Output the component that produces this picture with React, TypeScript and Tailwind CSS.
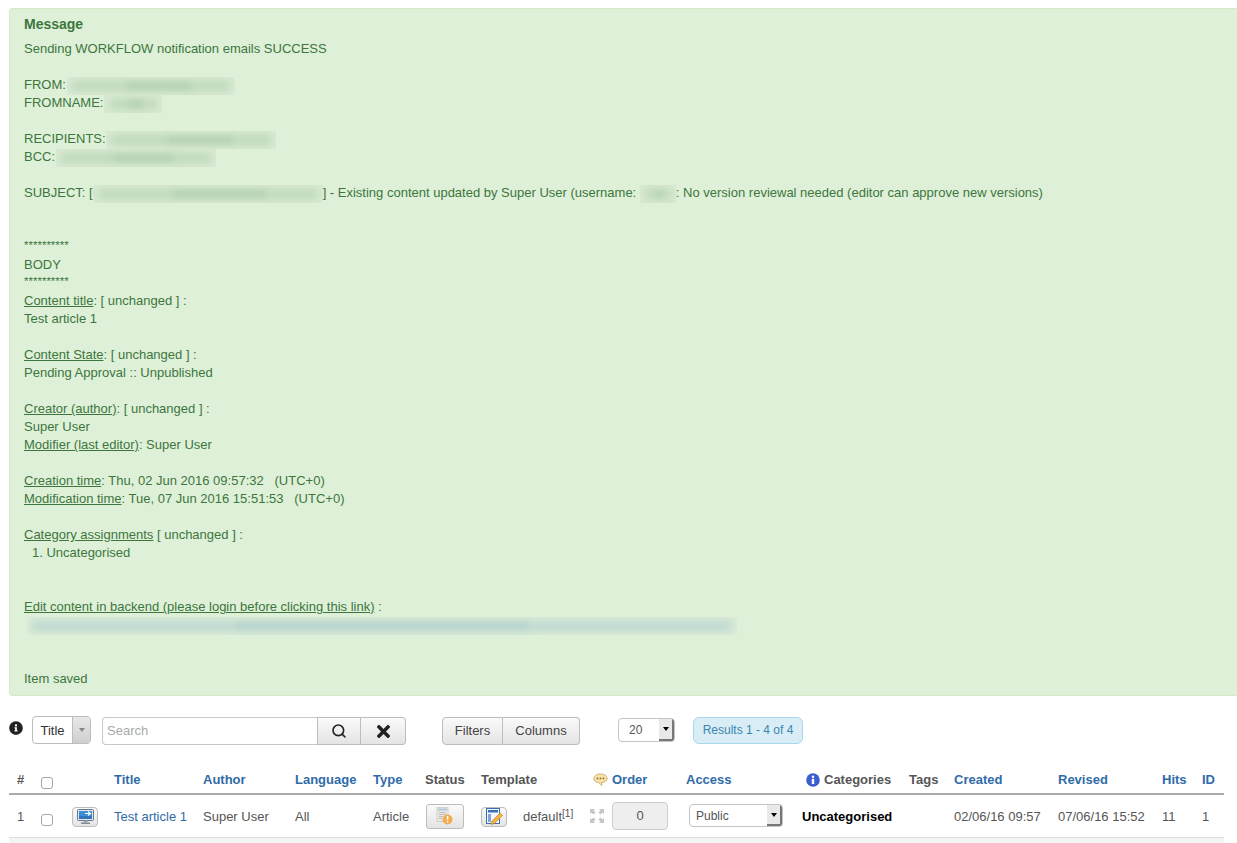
import React from 'react';
import { FaInfoCircle, FaTimes } from 'react-icons/fa';
import { Search } from 'lucide-react';

// redacted bits in the message: pale box with a few soft smudges
const Blur = ({ w, className = '' }: { w: number; className?: string }) => (
  <span className={`inline-flex align-middle h-[18px] overflow-hidden bg-[#d8ead3] px-[5px] items-center ${className}`} style={{ width: w }}>
    <span className="h-[8px] flex-[3] bg-[#b9d5b6] blur-[4px]" />
    <span className="h-[8px] flex-[4] bg-[#a9caa7] blur-[4px]" />
    <span className="h-[8px] flex-[2] bg-[#b9d5b6] blur-[4px]" />
  </span>
);

const Line = ({ children }: { children?: React.ReactNode }) => (
  <div className="h-[18px] leading-[18px] whitespace-nowrap">{children}</div>
);

const Stars = () => <div className="h-[18px] leading-[15px] text-[11.5px] whitespace-nowrap">**********</div>;

const U = ({ children }: { children: React.ReactNode }) => <span className="underline">{children}</span>;

const MonitorIcon = () => (
  <svg width="17" height="16" viewBox="0 0 17 16">
    <rect x="0.500" y="0.500" width="16" height="11" rx="1" fill="#dfe6ec" stroke="#66778a" />
    <rect x="2" y="2" width="13" height="8" fill="#3d8fd8" />
    <rect x="2" y="7" width="13" height="3" fill="#2f74bd" />
    <path d="M8 4.500h5M11 2.500l2.500 2-2.500 2" stroke="#fff" strokeWidth="1.200" fill="none" />
    <rect x="6.500" y="11.500" width="4" height="2" fill="#9aa4ad" />
    <rect x="4" y="13.500" width="9" height="1.500" fill="#7f8a94" />
  </svg>
);

const StatusIcon = () => (
  <svg width="18" height="19" viewBox="0 0 18 19" className="opacity-90">
    <rect x="1" y="0.500" width="11" height="14" fill="#ebe8e0" stroke="#cfccc4" />
    <rect x="2" y="1.500" width="9" height="2" fill="#a9c4de" />
    <path d="M3 5.500h7M3 7.500h7M3 9.500h4M3 11.500h3" stroke="#b4b8bc" strokeWidth="1" />
    <circle cx="11.500" cy="12.500" r="5" fill="#f4a53a" />
    <rect x="10.800" y="9" width="1.500" height="4" fill="#fff" />
    <rect x="10.800" y="14" width="1.500" height="1.500" fill="#fff" />
  </svg>
);

const TemplateIcon = () => (
  <svg width="17" height="17" viewBox="0 0 17 17">
    <rect x="0.500" y="0.500" width="13" height="15" fill="#f4f8fc" stroke="#3d6fb4" />
    <rect x="2" y="2" width="10" height="2.500" fill="#3d6fb4" />
    <rect x="2" y="6" width="3" height="8" fill="#7fa6d6" />
    <path d="M6 13l-1 3.500 3.500-1L16.500 7.500 14 5z" fill="#f3b33d" stroke="#b9772a" strokeWidth="0.600" />
  </svg>
);

const CommentIcon = () => (
  <svg width="15" height="14" viewBox="0 0 15 14">
    <path d="M7.500 1C3.600 1 .8 2.900.8 5.400c0 2.200 2 3.800 4.900 4.200l3.200 3-.5-2.900c3.100-.2 5.800-1.900 5.800-4.300C14.200 2.900 11.400 1 7.500 1z" fill="#f8e0a6" stroke="#c9a45b" strokeWidth="0.800" />
    <circle cx="4.500" cy="5.400" r="0.900" fill="#8a6a2c" />
    <circle cx="7.500" cy="5.400" r="0.900" fill="#8a6a2c" />
    <circle cx="10.500" cy="5.400" r="0.900" fill="#8a6a2c" />
  </svg>
);

const BlueInfo = () => (
  <svg width="14" height="14" viewBox="0 0 14 14">
    <circle cx="7" cy="7" r="6.800" fill="#3b5fd0" />
    <circle cx="7" cy="3.800" r="1.200" fill="#fff" />
    <rect x="5.800" y="5.800" width="2.400" height="5.200" fill="#fff" />
  </svg>
);

const MoveIcon = () => (
  <svg width="14" height="14" viewBox="0 0 14 14" fill="#c4c4c4">
    <path d="M0 0h5L3.500 1.500 5.500 3.500 3.500 5.500 1.500 3.500 0 5z" />
    <path d="M14 0H9l1.500 1.500-2 2 2 2 2-2L14 5z" />
    <path d="M0 14h5l-1.500-1.500 2-2-2-2-2 2L0 9z" />
    <path d="M14 14H9l1.500-1.500-2-2 2-2 2 2L14 9z" />
  </svg>
);

const Caret = () => <span className="block w-0 h-0 border-x-[3px] border-x-transparent border-t-[4px] border-t-black" />;

const NativeSelect = ({ label, className, labelClass }: { label: string; className: string; labelClass: string }) => (
  <div className={`flex bg-white border border-[#c4c4c4] rounded-[4px] overflow-hidden text-[#555] text-[12px] ${className}`}>
    <span className={`flex-1 leading-[22px] ${labelClass}`}>{label}</span>
    <span className="w-[15px] bg-[#e9e9e9] border-r-2 border-b-2 border-[#777] flex items-center justify-center">
      <Caret />
    </span>
  </div>
);

const btn = 'bg-gradient-to-b from-[#fafafa] to-[#e4e4e4] border border-[#bdbdbd]';

const cols = [
  'w-[32px]', 'w-[31px]', 'w-[42px]', 'w-[89px]', 'w-[92px]', 'w-[78px]', 'w-[52px]', 'w-[56px]',
  'w-[112px]', 'w-[93px]', 'w-[120px]', 'w-[103px]', 'w-[45px]', 'w-[104px]', 'w-[104px]', 'w-[40px]', 'w-[22px]',
];

const H = ({ children, link, className = '' }: { children?: React.ReactNode; link?: boolean; className?: string }) => (
  <th className={`p-0 pt-[4px] text-left font-bold align-middle ${link ? 'text-[#2f6ba8]' : 'text-[#555]'} ${className}`}>{children}</th>
);

export default function App() {
  return (
    <div className="h-[843px] overflow-hidden bg-white text-[13px] font-['Liberation_Sans',Arial,sans-serif]">
      <div className="h-[8px]" />
      {/* system message */}
      <div className="ml-[9px] h-[688px] bg-[#dff0d8] border border-[#d6e9c6] rounded-l-[4px] border-r-0 pl-[14px] pt-[6px] text-[#3c763d]">
        <div className="h-[18px] leading-[18px] font-bold text-[14px] mb-[7px]">Message</div>
        <Line>Sending WORKFLOW notification emails SUCCESS</Line>
        <Line />
        <Line>FROM: <Blur w={168} className="-ml-[3px]" /></Line>
        <Line>FROMNAME: <Blur w={58} className="-ml-[3px]" /></Line>
        <Line />
        <Line>RECIPIENTS: <Blur w={170} className="-ml-[3px]" /></Line>
        <Line>BCC: <Blur w={160} className="-ml-[3px]" /></Line>
        <Line />
        <Line>SUBJECT: [<Blur w={230} />] - Existing content updated by Super User (username: <Blur w={36} />: No version reviewal needed (editor can approve new versions)</Line>
        <Line />
        <Line />
        <Stars />
        <Line>BODY</Line>
        <Stars />
        <Line><U>Content title</U>: [ unchanged ] :</Line>
        <Line>Test article 1</Line>
        <Line />
        <Line><U>Content State</U>: [ unchanged ] :</Line>
        <Line>Pending Approval :: Unpublished</Line>
        <Line />
        <Line><U>Creator (author)</U>: [ unchanged ] :</Line>
        <Line>Super User</Line>
        <Line><U>Modifier (last editor)</U>: Super User</Line>
        <Line />
        <Line><U>Creation time</U>: Thu, 02 Jun 2016 09:57:32 &nbsp; (UTC+0)</Line>
        <Line><U>Modification time</U>: Tue, 07 Jun 2016 15:51:53 &nbsp; (UTC+0)</Line>
        <Line />
        <Line><U>Category assignments</U> [ unchanged ] :</Line>
        <Line><span className="pl-[8px]">1. Uncategorised</span></Line>
        <Line />
        <Line />
        <Line><U>Edit content in backend (please login before clicking this link)</U> :</Line>
        <Line>
          <span className="inline-flex items-center align-middle h-[18px] w-[710px] ml-[3px] px-[5px] overflow-hidden bg-[#dbecd7]">
            <span className="h-[8px] flex-[2] bg-[#b6d3cf] blur-[4px]" />
            <span className="h-[8px] flex-[3] bg-[#a9cbcb] blur-[4px]" />
            <span className="h-[8px] flex-[2] bg-[#b6d3cf] blur-[4px]" />
          </span>
        </Line>
        <Line />
        <Line />
        <Line>Item saved</Line>
      </div>

      {/* toolbar */}
      <div className="flex items-start ml-[9px] mt-[20px] h-[32px]">
        <FaInfoCircle className="mt-[5px] w-[14px] h-[14px] text-[#222]" />
        <div className="ml-[9px] flex h-[28px] w-[59px] border border-[#bdbdbd] rounded-[4px] overflow-hidden bg-white text-[#333]">
          <span className="w-[39px] text-center leading-[28px]">Title</span>
          <span className="flex-1 border-l border-[#bdbdbd] bg-gradient-to-b from-[#e8e8e8] to-[#cfcfcf] flex items-center justify-center">
            <span className="block w-0 h-0 border-x-[3px] border-x-transparent border-t-[4px] border-t-[#888]" />
          </span>
        </div>
        <div className="ml-[11px] mt-[1px] flex h-[28px] w-[304px]">
          <div className="w-[216px] border border-[#c8c8c8] border-r-0 rounded-l-[4px] bg-white pl-[4px] leading-[26px] text-[#a9a9a9]">Search</div>
          <div className={`w-[44px] ${btn} flex items-center justify-center`}><Search size={16} strokeWidth={2.4} color="#222" /></div>
          <div className={`w-[45px] ${btn} border-l-0 rounded-r-[4px] flex items-center justify-center`}><FaTimes size={19} color="#222" /></div>
        </div>
        <div className="ml-[36px] mt-[1px] flex h-[28px] text-[#444]">
          <div className={`w-[61px] ${btn} rounded-l-[4px] text-center leading-[26px]`}>Filters</div>
          <div className={`w-[77px] ${btn} border-l-0 rounded-r-[4px] text-center leading-[26px]`}>Columns</div>
        </div>
        <NativeSelect label="20" labelClass="pl-[10px]" className="ml-[38px] mt-[2px] w-[57px] h-[24px]" />
        <div className="ml-[18px] mt-[1px] h-[27px] w-[110px] rounded-[6px] border border-[#a9d8ec] bg-[#d9edf7] text-center leading-[25px] text-[12px] text-[#3a87ad]">Results 1 - 4 of 4</div>
      </div>

      {/* table */}
      <table className="ml-[9px] mt-[15px] w-[1215px] table-fixed border-collapse">
        <colgroup>{cols.map((c, i) => <col key={i} className={c} />)}</colgroup>
        <thead>
          <tr className="h-[31px] border-b-2 border-[#aaa] text-[13px]">
            <H className="pl-[8px]">#</H>
            <H><span className="block w-[12px] h-[12px] border border-[#a5a5a5] rounded-[3px] bg-white mt-[6px]" /></H>
            <H />
            <H link>Title</H>
            <H link>Author</H>
            <H link>Language</H>
            <H link>Type</H>
            <H>Status</H>
            <H>Template</H>
            <H link><span className="flex items-center gap-[4px]"><CommentIcon />Order</span></H>
            <H link>Access</H>
            <H><span className="flex items-center gap-[4px]"><BlueInfo />Categories</span></H>
            <H>Tags</H>
            <H link>Created</H>
            <H link>Revised</H>
            <H link>Hits</H>
            <H link>ID</H>
          </tr>
        </thead>
        <tbody>
          <tr className="h-[43px] border-b border-[#ddd] text-[#555] text-[13px]">
            <td className="pl-[8px] pt-[2px]">1</td>
            <td><span className="block w-[12px] h-[12px] border border-[#a5a5a5] rounded-[3px] bg-white mt-[8px]" /></td>
            <td><span className={`flex w-[26px] h-[20px] mt-[2px] ${btn} rounded-[4px] items-center justify-center`}><MonitorIcon /></span></td>
            <td className="text-[#2f6ba8] pt-[2px]">Test article 1</td>
            <td className="pt-[2px]">Super User</td>
            <td className="pt-[2px]">All</td>
            <td className="pt-[2px]">Article</td>
            <td><span className={`flex w-[38px] h-[25px] ml-[1px] mt-[1px] ${btn} rounded-[3px] items-center justify-center`}><StatusIcon /></span></td>
            <td>
              <div className="flex items-center gap-[16px] mt-[2px]">
                <span className={`flex w-[26px] h-[20px] ${btn} rounded-[4px] items-center justify-center`}><TemplateIcon /></span>
                <span className="whitespace-nowrap">default<sup className="text-[10px] leading-none align-baseline relative -top-[4px]">[1]</sup></span>
              </div>
            </td>
            <td>
              <div className="flex items-center gap-[8px] -ml-[3px]">
                <MoveIcon />
                <span className="w-[56px] h-[28px] bg-[#eee] border border-[#ccc] rounded-[4px] text-center leading-[26px]">0</span>
              </div>
            </td>
            <td><NativeSelect label="Public" labelClass="pl-[6px]" className="ml-[3px] w-[94px] h-[23px]" /></td>
            <td className="pt-[2px]"><span className="-ml-[4px] block font-bold text-black whitespace-nowrap">Uncategorised</span></td>
            <td />
            <td className="pt-[2px]">02/06/16 09:57</td>
            <td className="pt-[2px]">07/06/16 15:52</td>
            <td className="pt-[2px]">11</td>
            <td className="pt-[2px]">1</td>
          </tr>
        </tbody>
      </table>
      <div className="ml-[9px] w-[1215px] h-[6px] bg-[#f5f5f5]" />
    </div>
  );
}
